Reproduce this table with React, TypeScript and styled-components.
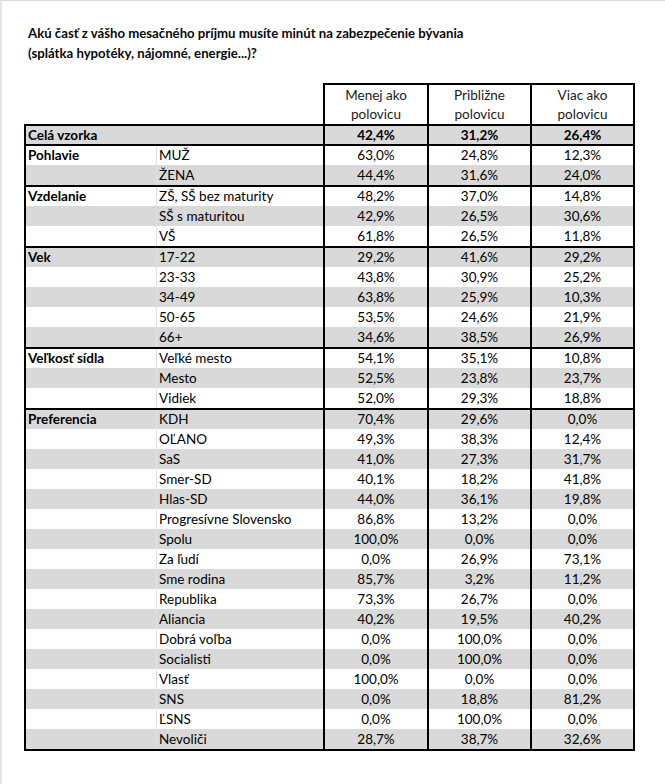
import React from "react";
import styled, { createGlobalStyle } from "styled-components";

const GlobalStyle = createGlobalStyle`
  html, body { margin: 0; padding: 0; background: #fff; }
  body { font-family: Lato, "Liberation Sans", sans-serif; color: #000; }
`;

const Page = styled.div`
  width: 665px;
  height: 784px;
  box-sizing: border-box;
  border-top: 1px solid #dadada;
  border-left: 2px solid #e4e4e4;
  padding: 22px 0 0 22px;
`;

const Title = styled.h1`
  margin: 0 0 20px 4px;
  font-size: 13.2px;
  line-height: 20px;
  font-weight: 700;
  color: #0a0a0a;
`;

const HeaderRow = styled.div`
  display: flex;
`;

const HeaderSpacer = styled.div`
  width: 299px;
  flex: none;
`;

const HeaderBox = styled.div`
  display: grid;
  grid-template-columns: 104px 103px 105px;
  border-top: 2px solid #000;
  height: 41px;
  box-sizing: border-box;
`;

const HeaderCell = styled.div<{ $last?: boolean }>`
  border-left: 2px solid #000;
  border-right: ${(p) => (p.$last ? "2px solid #000" : "none")};
  text-align: center;
  font-size: 13.5px;
  line-height: 19px;
  padding-top: 1px;
  color: #1a1a1a;
`;

const Table = styled.div`
  width: 611px;
  box-sizing: border-box;
  border: 2px solid #000;
`;

const Section = styled.div`
  border-top: 2px solid #000;
`;

const Row = styled.div<{ $shade: boolean; $h: number; $bold?: boolean }>`
  display: grid;
  grid-template-columns: 130px 167px 104px 103px 103px;
  height: ${(p) => p.$h}px;
  line-height: ${(p) => p.$h}px;
  background: ${(p) => (p.$shade ? "#d9d9d9" : "#fff")};
  font-size: 13.5px;
  font-weight: ${(p) => (p.$bold ? 700 : 400)};
  color: #000;
`;

const CategoryCell = styled.div`
  padding-left: 2px;
  font-weight: 700;
  white-space: nowrap;
  overflow: hidden;
`;

const SubCell = styled.div`
  border-left: 1px solid #e2e2e2;
  padding-left: 2px;
  white-space: nowrap;
  overflow: hidden;
`;

const WideLabel = styled.div`
  grid-column: 1 / span 2;
  padding-left: 2px;
`;

const ValueCell = styled.div`
  border-left: 2px solid #000;
  text-align: center;
  white-space: nowrap;
`;

type R = [string, string, string, string];
const sections: { name: string; rows: R[] }[] = [
  {
    name: "Pohlavie",
    rows: [
      ["MUŽ", "63,0%", "24,8%", "12,3%"],
      ["ŽENA", "44,4%", "31,6%", "24,0%"],
    ],
  },
  {
    name: "Vzdelanie",
    rows: [
      ["ZŠ, SŠ bez maturity", "48,2%", "37,0%", "14,8%"],
      ["SŠ s maturitou", "42,9%", "26,5%", "30,6%"],
      ["VŠ", "61,8%", "26,5%", "11,8%"],
    ],
  },
  {
    name: "Vek",
    rows: [
      ["17-22", "29,2%", "41,6%", "29,2%"],
      ["23-33", "43,8%", "30,9%", "25,2%"],
      ["34-49", "63,8%", "25,9%", "10,3%"],
      ["50-65", "53,5%", "24,6%", "21,9%"],
      ["66+", "34,6%", "38,5%", "26,9%"],
    ],
  },
  {
    name: "Veľkosť sídla",
    rows: [
      ["Veľké mesto", "54,1%", "35,1%", "10,8%"],
      ["Mesto", "52,5%", "23,8%", "23,7%"],
      ["Vidiek", "52,0%", "29,3%", "18,8%"],
    ],
  },
  {
    name: "Preferencia",
    rows: [
      ["KDH", "70,4%", "29,6%", "0,0%"],
      ["OĽANO", "49,3%", "38,3%", "12,4%"],
      ["SaS", "41,0%", "27,3%", "31,7%"],
      ["Smer-SD", "40,1%", "18,2%", "41,8%"],
      ["Hlas-SD", "44,0%", "36,1%", "19,8%"],
      ["Progresívne Slovensko", "86,8%", "13,2%", "0,0%"],
      ["Spolu", "100,0%", "0,0%", "0,0%"],
      ["Za ľudí", "0,0%", "26,9%", "73,1%"],
      ["Sme rodina", "85,7%", "3,2%", "11,2%"],
      ["Republika", "73,3%", "26,7%", "0,0%"],
      ["Aliancia", "40,2%", "19,5%", "40,2%"],
      ["Dobrá voľba", "0,0%", "100,0%", "0,0%"],
      ["Socialisti", "0,0%", "100,0%", "0,0%"],
      ["Vlasť", "100,0%", "0,0%", "0,0%"],
      ["SNS", "0,0%", "18,8%", "81,2%"],
      ["ĽSNS", "0,0%", "100,0%", "0,0%"],
      ["Nevoliči", "28,7%", "38,7%", "32,6%"],
    ],
  },
];

export default function App() {
  let idx = 1;
  return (
    <>
      <GlobalStyle />
      <Page>
        <Title>
          Akú časť z vášho mesačného príjmu musíte minút na zabezpečenie bývania
          <br />
          (splátka hypotéky, nájomné, energie...)?
        </Title>
        <HeaderRow>
          <HeaderSpacer />
          <HeaderBox>
            <HeaderCell>
              Menej ako
              <br />
              polovicu
            </HeaderCell>
            <HeaderCell>
              Približne
              <br />
              polovicu
            </HeaderCell>
            <HeaderCell $last>
              Viac ako
              <br />
              polovicu
            </HeaderCell>
          </HeaderBox>
        </HeaderRow>
        <Table>
          <Row $shade $h={18} $bold>
            <WideLabel>Celá vzorka</WideLabel>
            <ValueCell>42,4%</ValueCell>
            <ValueCell>31,2%</ValueCell>
            <ValueCell>26,4%</ValueCell>
          </Row>
          {sections.map((s) => (
            <Section key={s.name}>
              {s.rows.map((r, i) => {
                const shade = idx % 2 === 0;
                idx++;
                return (
                  <Row key={r[0]} $shade={shade} $h={i === 0 ? 19 : 20}>
                    <CategoryCell>{i === 0 ? s.name : ""}</CategoryCell>
                    <SubCell>{r[0]}</SubCell>
                    <ValueCell>{r[1]}</ValueCell>
                    <ValueCell>{r[2]}</ValueCell>
                    <ValueCell>{r[3]}</ValueCell>
                  </Row>
                );
              })}
            </Section>
          ))}
        </Table>
      </Page>
    </>
  );
}
